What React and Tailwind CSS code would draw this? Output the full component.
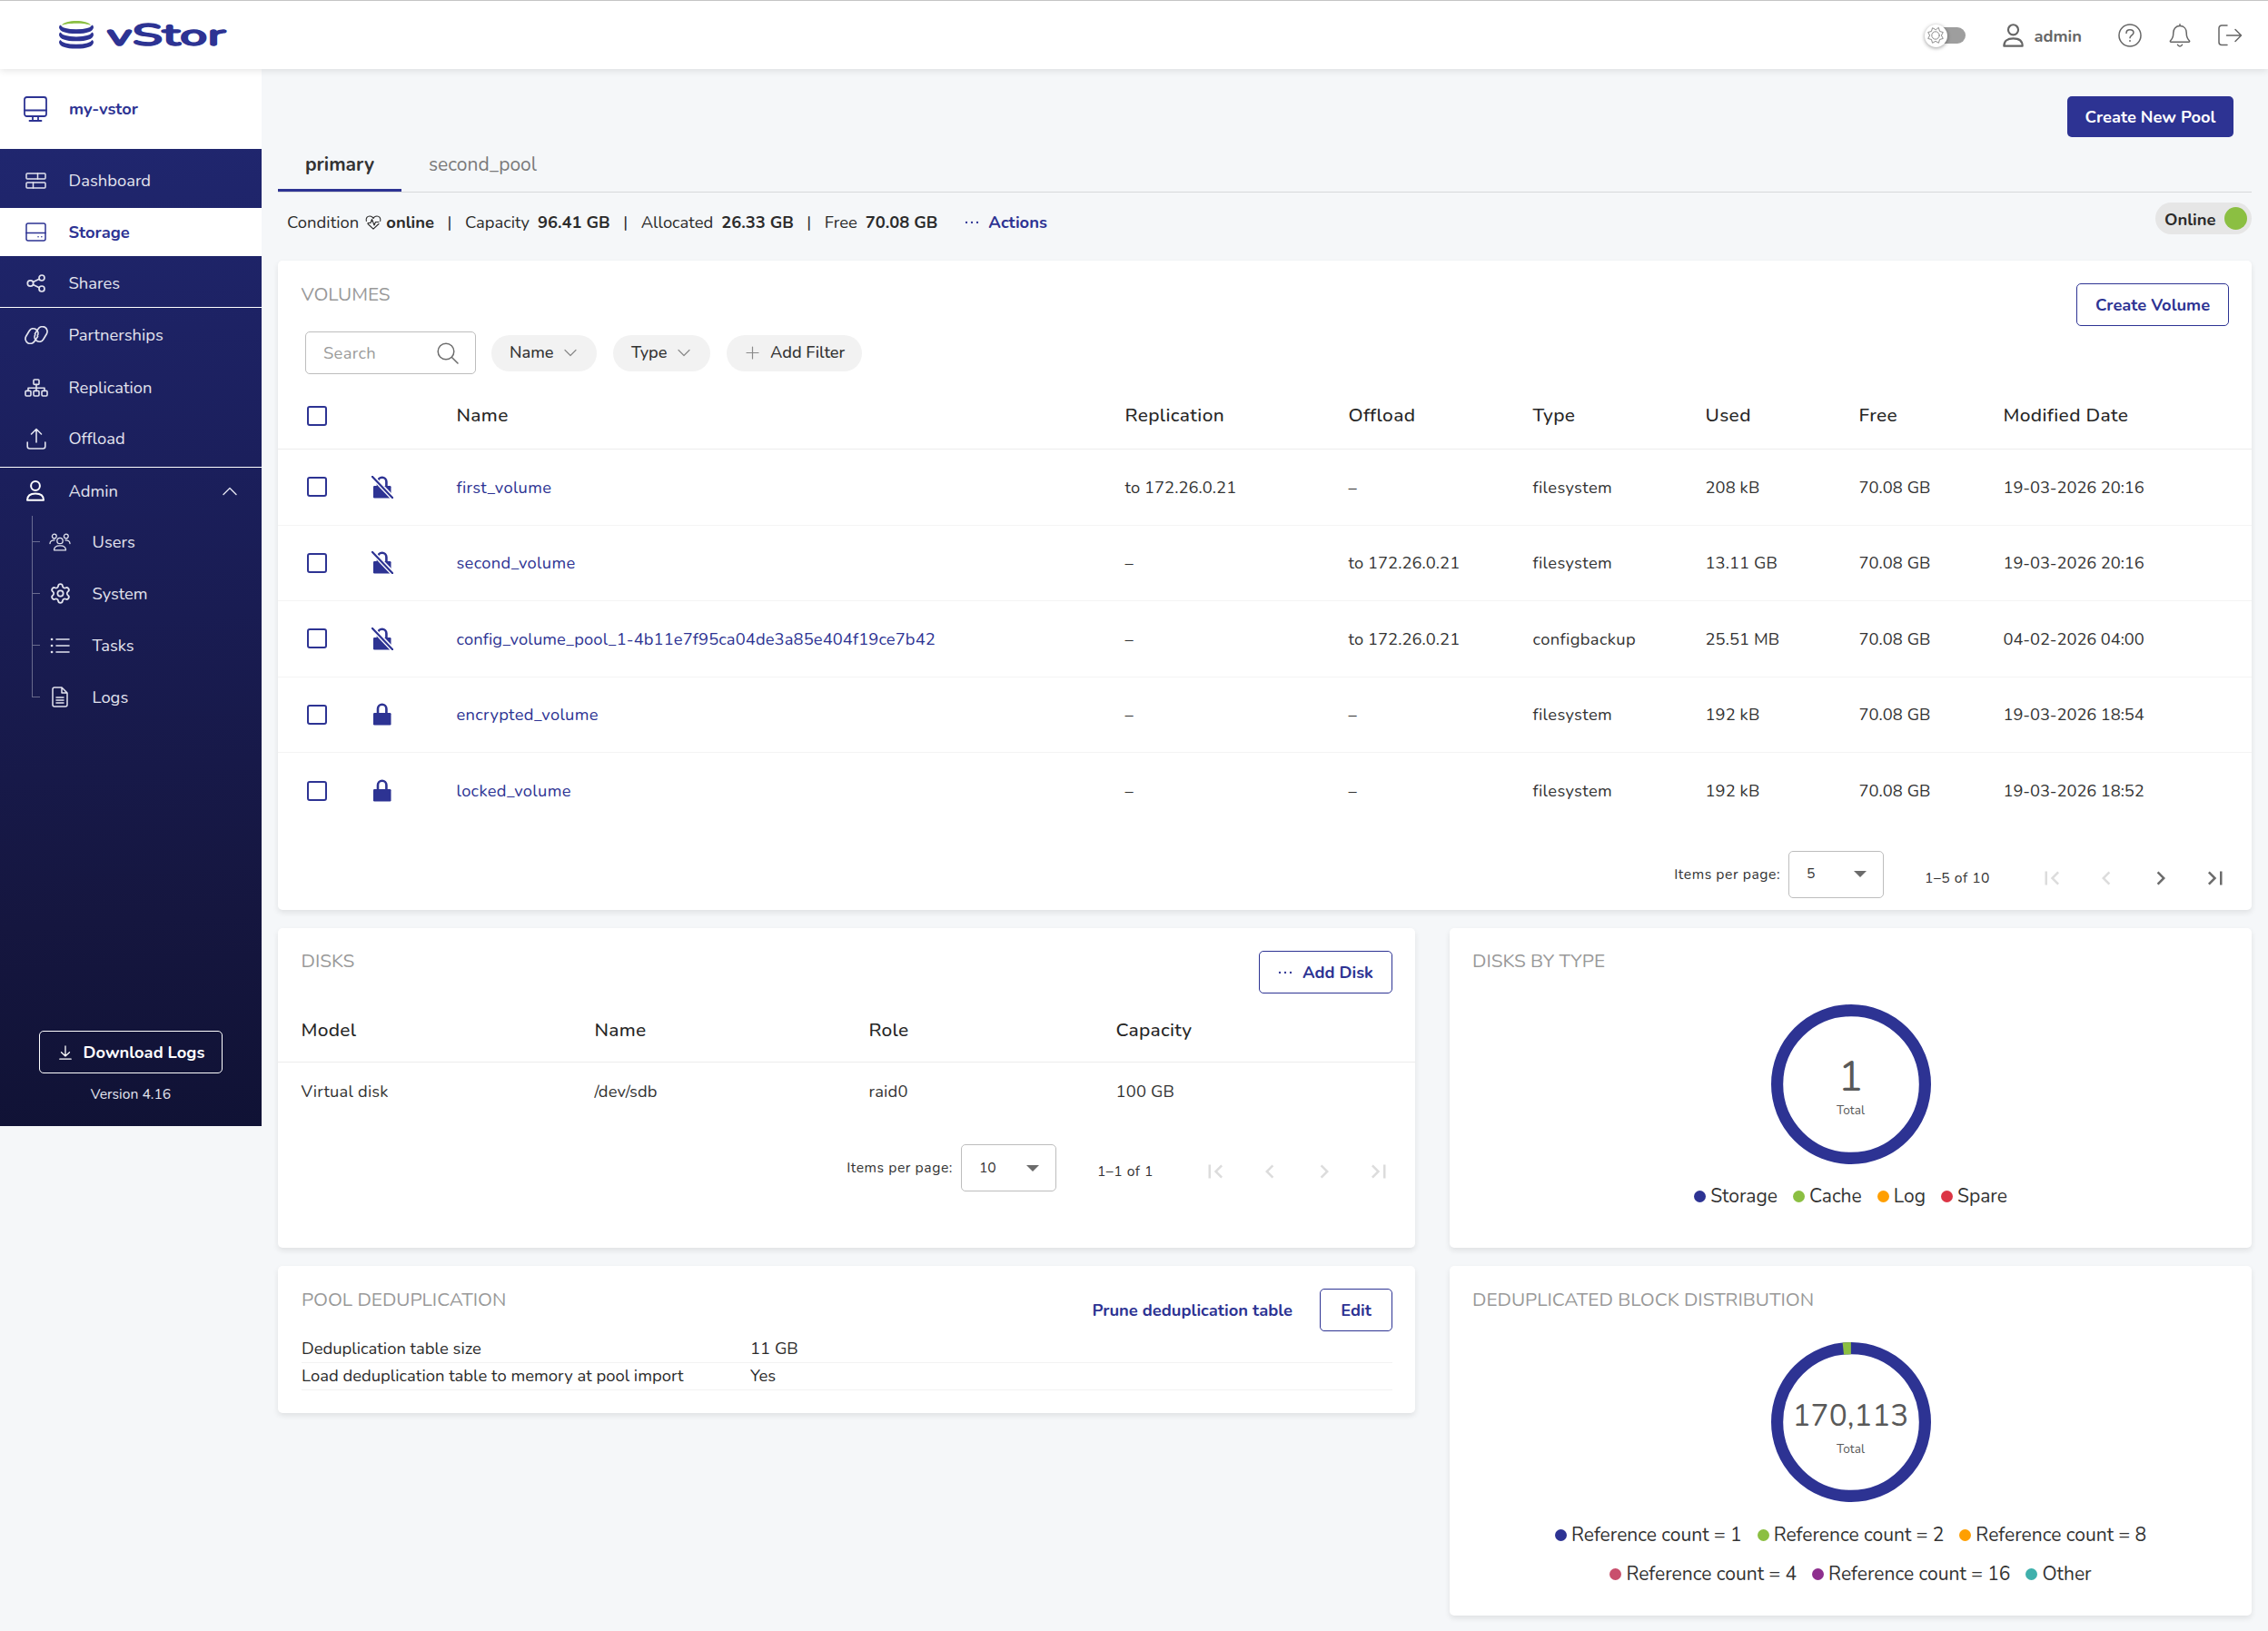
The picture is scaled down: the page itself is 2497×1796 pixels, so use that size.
import { Settings } from 'lucide-react';
import clsx from 'clsx';

const NAVY = '#2d3393';

const volumes = [
  { name: 'first_volume', locked: false, replication: 'to 172.26.0.21', offload: '–', type: 'filesystem', used: '208 kB', free: '70.08 GB', modified: '19-03-2026 20:16' },
  { name: 'second_volume', locked: false, replication: '–', offload: 'to 172.26.0.21', type: 'filesystem', used: '13.11 GB', free: '70.08 GB', modified: '19-03-2026 20:16' },
  { name: 'config_volume_pool_1-4b11e7f95ca04de3a85e404f19ce7b42', locked: false, replication: '–', offload: 'to 172.26.0.21', type: 'configbackup', used: '25.51 MB', free: '70.08 GB', modified: '04-02-2026 04:00' },
  { name: 'encrypted_volume', locked: true, replication: '–', offload: '–', type: 'filesystem', used: '192 kB', free: '70.08 GB', modified: '19-03-2026 18:54' },
  { name: 'locked_volume', locked: true, replication: '–', offload: '–', type: 'filesystem', used: '192 kB', free: '70.08 GB', modified: '19-03-2026 18:52' },
];

/* ---------- icons ---------- */

function Icon({ w = 24, h = w, box = `0 0 ${w} ${h}`, sw = 1.5, children, className }) {
  return (
    <svg
      width={w}
      height={h}
      viewBox={box}
      fill="none"
      stroke="currentColor"
      strokeWidth={sw}
      strokeLinecap="round"
      strokeLinejoin="round"
      className={clsx('shrink-0', className)}
    >
      {children}
    </svg>
  );
}

const Logo = () => (
  <svg width="200" height="40" viewBox="0 0 200 40" className="mt-[9px] shrink-0 overflow-visible">
    <path d="M3 5C6 -1.6 32 -1.6 35 5C30 2 8 2 3 5z" fill="#8bbf42" />
    {[0, 8.2, 16.6].map((y) => (
      <path
        key={y}
        transform={`translate(0 ${y})`}
        d="M0 7.2Q0 5 1.5 4.4Q4 9 19 9.2Q34 9 36.5 4.4Q38 5 38 7.2Q37 14 19 14Q1 14 0 7.2z"
        fill={NAVY}
      />
    ))}
    <text
      x="52.5"
      y="27"
      fontFamily="Nunito, 'Noto Sans', sans-serif"
      fontWeight="600"
      fontSize="33"
      fill={NAVY}
      stroke={NAVY}
      strokeWidth="1.5"
      strokeLinejoin="round"
      textLength="131"
      lengthAdjust="spacingAndGlyphs"
    >
      vStor
    </text>
  </svg>
);

const MonitorIcon = () => (
  <Icon w={26} h={28} sw={1.8}>
    <rect x="1" y="1" width="24" height="21" rx="2.5" />
    <path d="M1 15.5h24M10 22v4M16 22v4M6.5 27h13" />
  </Icon>
);
const DashboardIcon = () => (
  <Icon w={23} h={18} sw={1.5}>
    <rect x="1" y="1" width="21" height="6" rx="1" />
    <rect x="1" y="11" width="21" height="6" rx="1" />
    <path d="M13.5 1v6M8.5 11v6" />
  </Icon>
);
const StorageIcon = () => (
  <Icon w={23} h={21} sw={1.5}>
    <rect x="1" y="1" width="21" height="19" rx="2" />
    <path d="M1 11.5h21M14 15.8h.1M17.8 15.8h.1" />
  </Icon>
);
const ShareIcon = () => (
  <Icon w={22} h={20} sw={1.7}>
    <circle cx="4.5" cy="10" r="3.2" />
    <circle cx="17" cy="4" r="3" />
    <circle cx="17" cy="16" r="3" />
    <path d="M7.5 8.6l6.7-3.3M7.5 11.4l6.7 3.3" />
  </Icon>
);
const LinkIcon = () => (
  <Icon w={28} h={20} sw={1.7}>
    <path d="M15.5 11.5l-3.5 5.200a5.200 5.200 0 0 1-9.300-5.400l3.600-6.100a5.200 5.200 0 0 1 9 5.200" />
    <path d="M12.500 8.500l3.500-5.200a5.200 5.200 0 0 1 9.300 5.400l-3.600 6.100a5.200 5.200 0 0 1-9-5.200" />
  </Icon>
);
const TreeIcon = () => (
  <Icon w={26} h={20} sw={1.6}>
    <rect x="10" y="1" width="6" height="5.4" rx="1" />
    <rect x="1" y="13.4" width="6" height="5.6" rx="1.2" />
    <rect x="10" y="13.4" width="6" height="5.6" rx="1.2" />
    <rect x="19" y="13.4" width="6" height="5.6" rx="1.2" />
    <path d="M13 6.5v7M4 13v-2.8h18V13" />
  </Icon>
);
const UploadIcon = () => (
  <Icon w={22} h={24} sw={1.6}>
    <path d="M11 16V1.500M5.500 7L11 1.500 16.500 7M1.200 16v4.500a2.500 2.500 0 0 0 2.500 2.500h14.600a2.500 2.500 0 0 0 2.500-2.500V16" />
  </Icon>
);
const UserIcon = ({ w = 20, h = 23, sw = 1.9 }) => (
  <Icon w={w} h={h} box="0 0 20 23" sw={sw}>
    <circle cx="10" cy="6" r="4.9" />
    <path d="M1 21.800c0-4.700 3-7.300 9-7.300s9 2.600 9 7.300z" />
  </Icon>
);
const UsersIcon = () => (
  <Icon w={24} h={20} sw={1.3}>
    <circle cx="12" cy="8.5" r="3.2" />
    <circle cx="5.8" cy="3.6" r="2.4" />
    <circle cx="18.800" cy="3.6" r="2.4" />
    <path d="M5.500 18.800c0-3.600 2.500-5 6.500-5s6.500 1.400 6.500 5zM1 11.500c0-2.500 1.800-3.700 5-3.600M23 11.500c0-2.500-1.800-3.700-5-3.600" />
  </Icon>
);
const ListIcon = () => (
  <Icon w={22} h={18} sw={1.6}>
    <path d="M7 2h14M7 9h14M7 16h14" />
    <path d="M2 2h.1M2 9h.1M2 16h.1" strokeWidth="2.6" />
  </Icon>
);
const FileIcon = () => (
  <Icon w={18} h={23} sw={1.5}>
    <path d="M11 1H3a2 2 0 0 0-2 2v17a2 2 0 0 0 2 2h12a2 2 0 0 0 2-2V7zM11 1v6h6M5 12h8M5 15h8M5 18h8" />
  </Icon>
);
const ChevronUp = () => (
  <Icon w={16} h={10} sw={1.4}>
    <path d="M1 8.500l7-7 7 7" />
  </Icon>
);
const ChevronDown = () => (
  <Icon w={14} h={9} sw={1.2} className="text-[#8a8a8a]">
    <path d="M1 1.500l6 6 6-6" />
  </Icon>
);
const DownloadIcon = () => (
  <Icon w={14} h={16} sw={1.3}>
    <path d="M7 1v11M2.500 7.800L7 12l4.500-4.200M.8 15.200h12.400" />
  </Icon>
);
const Dots = () => (
  <svg width="16" height="4" viewBox="0 0 16 4" fill="currentColor" className="shrink-0">
    <circle cx="2" cy="2" r="1.15" />
    <circle cx="8" cy="2" r="1.15" />
    <circle cx="14" cy="2" r="1.15" />
  </svg>
);
const HelpIcon = () => (
  <Icon w={26} sw={1.5}>
    <circle cx="13" cy="13" r="12" />
    <path d="M9 10.400c0-2.300 1.700-3.700 4-3.700s4 1.300 4 3.300c0 2.800-4 3-4 5.700" />
    <path d="M13 19v.1" strokeWidth="1.9" />
  </Icon>
);
const BellIcon = () => (
  <Icon w={24} h={26} sw={1.5}>
    <path d="M12 .8V2.500M12 2.500c-4.400 0-7.200 3.200-7.200 7.500 0 6-1.400 7-3.200 8.700-.6.7-.2 1.500.6 1.500h19.600c.8 0 1.200-.8.6-1.500-1.800-1.700-3.200-2.700-3.200-8.700 0-4.300-2.800-7.500-7.200-7.500zM9.500 23.200c.5 1.200 1.400 1.700 2.500 1.700s2-.5 2.500-1.700" />
  </Icon>
);
const LogoutIcon = () => (
  <Icon w={27} h={24} sw={1.5}>
    <path d="M10 1H4a3 3 0 0 0-3 3v15.500a3 3 0 0 0 3 3h6M9.500 12h16M19 5.500l6.500 6.500-6.500 6.500" />
  </Icon>
);
const HeartIcon = () => (
  <Icon w={18} h={16} sw={1.1}>
    <path d="M3 9.500l6 5.700 6-5.700M1.300 6.500C.6 3 2.500 1 5 1c2 0 3.300 1 4 2.500C9.700 2 11 1 13 1c2.500 0 4.400 2 3.700 5.500" />
    <path d="M3 8.500h3l1.500-4 2.500 6.500 1.500-3.500H15" />
  </Icon>
);
const SearchIcon = () => (
  <Icon w={24} sw={1.5} className="text-[#6b6b6b]">
    <circle cx="10" cy="10" r="8.8" />
    <path d="M16.500 16.500l6.500 6.500" />
  </Icon>
);
const PlusIcon = () => (
  <Icon w={15} sw={1.2} className="text-[#8a8a8a]">
    <path d="M7.500 1v13M1 7.500h13" />
  </Icon>
);

// Eight pointed sun on the theme switch knob
const sunPoints = Array.from({ length: 16 }, (_, i) => {
  const r = i % 2 ? 6.4 : 9;
  const a = (i * Math.PI) / 8 + Math.PI / 8;
  return `${(10 + r * Math.sin(a)).toFixed(2)},${(10 - r * Math.cos(a)).toFixed(2)}`;
}).join(' ');
const SunIcon = () => (
  <Icon w={20} sw={1} className="text-[#8c8c8c]">
    <polygon points={sunPoints} />
    <circle cx="10" cy="10" r="4.2" />
  </Icon>
);

function LockIcon({ locked }) {
  return (
    <svg width="24" height="25" viewBox="0 0 24 25" className="text-[#2d3393]" fill="none" stroke="currentColor">
      <path d="M7 12V6.500a4.700 4.700 0 0 1 9.400 0V12" strokeWidth="2.6" />
      <rect x="2" y="11" width="19.5" height="13.5" rx="1.2" fill="currentColor" stroke="none" />
      {!locked && (
        <>
          <path d="M-1 -1.200L25 26" stroke="#fff" strokeWidth="5" />
          <path d="M.8 .8L23.200 24.200" strokeWidth="2.2" strokeLinecap="round" />
        </>
      )}
    </svg>
  );
}

/* ---------- shared pieces ---------- */

const Card = ({ className, children }) => (
  <section className={clsx('flex flex-col rounded-[5px] bg-white shadow-[0_3px_6px_rgba(0,0,0,0.09)]', className)}>
    {children}
  </section>
);

const CardTitle = ({ children, className }) => (
  <h2 className={clsx('text-[20.75px] leading-[27px] whitespace-nowrap text-[#999]', className)}>{children}</h2>
);

const OutlineButton = ({ children, className }) => (
  <button
    className={clsx(
      'flex h-[47px] items-center justify-center rounded-[5px] border-[1.5px] border-[#2d3393] pt-px text-[18.33px] font-bold whitespace-nowrap text-[#2d3393]',
      className
    )}
  >
    {children}
  </button>
);

const Checkbox = () => <span className="block size-[22px] rounded-[3px] border-2 border-[#2d3393]" />;

const pageIcons = [
  'M18.41 16.59L13.82 12l4.59-4.59L17 6l-6 6 6 6zM6 6h2v12H6z',
  'M15.41 7.41L14 6l-6 6 6 6 1.41-1.41L10.83 12z',
  'M10 6L8.59 7.41 13.17 12l-4.58 4.59L10 18l6-6z',
  'M5.59 7.41L10.18 12l-4.59 4.59L7 18l6-6-6-6zM16 6h2v12h-2z',
];

function Paginator({ size, range, active }) {
  return (
    <div className="flex h-[52px] items-center justify-end pr-[10px] text-[15.7px] text-[#333]">
      <span className="mr-[9px] pt-[2px] tracking-[0.55px]">Items per page:</span>
      <div className="flex h-full w-[105px] items-center justify-between rounded-[5px] border-[1.5px] border-[#bdbdbd] pr-[18px] pl-[19px]">
        <span className="pt-px">{size}</span>
        <svg width="14" height="7" viewBox="0 0 14 7" fill="#6b6b6b">
          <path d="M0 0h14L7 7z" />
        </svg>
      </div>
      <span className="mt-[10px] ml-[45px] tracking-[0.5px]">{range}</span>
      <div className="mt-[8px] ml-[38px] flex">
        {pageIcons.map((d, i) => (
          <span key={d} className="flex w-[60px] justify-center">
            <svg width="30" height="30" viewBox="0 0 24 24" fill={active.includes(i) ? '#6b6b6b' : '#dcdcdc'}>
              <path d={d} />
            </svg>
          </span>
        ))}
      </div>
    </div>
  );
}

function Donut({ value, valueClass, totalClass, slice = 0 }) {
  const r = 81.4;
  const c = 2 * Math.PI * r;
  return (
    <div className="relative size-[176px]">
      <svg width="176" height="176" viewBox="0 0 176 176" fill="none" strokeWidth="13.2">
        <circle cx="88" cy="88" r={r} stroke={NAVY} />
        {slice > 0 && (
          <circle
            cx="88"
            cy="88"
            r={r}
            stroke="#8bbf42"
            strokeDasharray={`${c * slice} ${c}`}
            transform={`rotate(${-90 - slice * 360} 88 88)`}
          />
        )}
      </svg>
      <div className="absolute inset-0 flex flex-col items-center text-[#595959]">
        <span className={valueClass}>{value}</span>
        <span className={clsx('text-[13.6px] leading-4 tracking-[0.1px]', totalClass)}>Total</span>
      </div>
    </div>
  );
}

const Legend = ({ items, className }) => (
  <div className={clsx('flex justify-center gap-[17px] text-[21px] leading-7 text-[#333]', className)}>
    {items.map(([label, dot]) => (
      <span key={label} className="flex items-center gap-[5px] whitespace-nowrap">
        <i className={clsx('size-[13px] rounded-full', dot)} />
        {label}
      </span>
    ))}
  </div>
);

/* ---------- page sections ---------- */

function Header() {
  return (
    <header className="relative z-10 flex h-[76px] items-center border-t border-[#c4c4c4] bg-white pr-[28px] pl-[65px] text-[#666] shadow-[0_2px_8px_rgba(0,0,0,0.1)]">
      <Logo />
      <div className="mt-[2px] ml-auto flex items-center">
        <div className="relative flex h-[26px] w-[45px] items-center">
          <span className="ml-[6px] h-[18px] w-[39px] rounded-full bg-[#9e9e9e]" />
          <span className="absolute left-0 flex size-[25px] items-center justify-center rounded-full bg-white shadow-[0_1px_4px_rgba(0,0,0,0.4)]">
            <SunIcon />
          </span>
        </div>
        <span className="ml-[41px]">
          <UserIcon w={23} h={26} sw={1.9} />
        </span>
        <span className="mt-px ml-[12px] text-[18.33px] font-bold">admin</span>
        <div className="ml-[40px] flex items-center gap-[30px]">
          <HelpIcon />
          <BellIcon />
          <LogoutIcon />
        </div>
      </div>
    </header>
  );
}

const NavItem = ({ icon, label, className }) => (
  <a className={clsx('flex shrink-0 items-center text-[18.4px]', className)}>
    <span className="flex w-[75.5px] justify-center pr-[2px] pl-[6px]">{icon}</span>
    {label}
  </a>
);

const adminItems = [
  ['Users', <UsersIcon />],
  ['System', <Settings size={25} strokeWidth={1.7} />],
  ['Tasks', <ListIcon />],
  ['Logs', <FileIcon />],
];

function Sidebar() {
  return (
    <aside className="flex h-[1164px] w-[288px] shrink-0 flex-col bg-[linear-gradient(176deg,#212873_0%,#1b1f5c_38%,#15163f_80%,#101235_100%)] text-[#e2e3ee]">
      <div className="flex h-[88px] shrink-0 items-center bg-white pl-[26px] text-[18.33px] font-bold text-[#2d3393]">
        <MonitorIcon />
        <span className="ml-[24px]">my-vstor</span>
      </div>
      <NavItem icon={<DashboardIcon />} label="Dashboard" className="h-[65px] pt-[5px]" />
      <NavItem icon={<StorageIcon />} label="Storage" className="h-[53px] bg-white font-bold text-[#2d3393]" />
      <NavItem icon={<ShareIcon />} label="Shares" className="h-[57px] border-b border-white pt-[4px]" />
      <NavItem icon={<LinkIcon />} label="Partnerships" className="h-[59px] pt-px" />
      <NavItem icon={<TreeIcon />} label="Replication" className="h-[57px]" />
      <NavItem icon={<UploadIcon />} label="Offload" className="h-[60px] border-b border-white pb-[3px]" />
      <div className="flex h-[53px] shrink-0 items-center justify-between pr-[27px] pb-[2px]">
        <NavItem icon={<span className="pr-[2px] text-white"><UserIcon w={20} h={23} sw={2} /></span>} label="Admin" />
        <ChevronUp />
      </div>
      {adminItems.map(([label, icon], i) => (
        <div key={label} className="flex h-[57px] shrink-0 items-center text-[18.4px]">
          <div className="ml-[35px] h-full w-[9px]">
            <div className="h-[29px] border-b border-l border-white/35" />
            {i < adminItems.length - 1 && <div className="h-[28px] border-l border-white/35" />}
          </div>
          <span className="flex w-[57.5px] items-center justify-center pr-[13px]">{icon}</span>
          {label}
        </div>
      ))}
      <div className="mt-auto flex flex-col items-center">
        <button className="flex h-[47px] w-[202px] items-center justify-center gap-[13px] rounded-[5px] border-[1.5px] border-white pl-[2px] text-[18.33px] font-bold text-white">
          <DownloadIcon />
          <span className="pt-px">Download Logs</span>
        </button>
        <span className="mt-[12px] mb-[24px] text-[15.7px] leading-[22px]">Version 4.16</span>
      </div>
    </aside>
  );
}

const Stat = ({ label, value }) => (
  <>
    <span className="w-[34px] text-center">|</span>
    <span className="mr-[9px]">{label}</span>
    <span className="text-[18.33px] font-bold">{value}</span>
  </>
);

function PoolStatus() {
  return (
    <div className="flex h-[75px] items-start justify-between pl-[10px] text-[18.4px] text-[#2b2b2b]">
      <div className="flex h-[66px] items-center whitespace-nowrap">
        <span className="mr-[7px] tracking-[0.05px]">Condition</span>
        <HeartIcon />
        <span className="ml-[5px] font-bold">online</span>
        <Stat label="Capacity" value="96.41 GB" />
        <Stat label="Allocated" value="26.33 GB" />
        <Stat label="Free" value="70.08 GB" />
        <span className="ml-[30px] flex items-center gap-[10px] font-bold text-[#2d3393]">
          <Dots />
          Actions
        </span>
      </div>
      <div className="mt-[11px] flex h-[35px] w-[106px] items-center justify-between rounded-full bg-[#e6e6e6] pr-[5px] pl-[10px] font-bold">
        <span className="pt-[2px]">Online</span>
        <span className="size-[25px] rounded-full bg-[#8bbf42]" />
      </div>
    </div>
  );
}

const pill = 'flex h-[40px] items-center rounded-full bg-[#f2f2f2] text-[18.2px] font-medium text-[#333]';
const volumeGrid = 'grid grid-cols-[71px_93.5px_736px_246px_203px_190px_169px_159px_1fr] items-center pl-[32px] whitespace-nowrap';

function VolumesCard() {
  return (
    <Card className="h-[715px]">
      <div className="flex h-[78px] items-start justify-between pr-[25px] pl-[25.5px]">
        <CardTitle className="mt-[24px]">VOLUMES</CardTitle>
        <OutlineButton className="mt-[25px] w-[168px]">Create Volume</OutlineButton>
      </div>

      <div className="flex items-center pl-[30px]">
        <div className="flex h-[47px] w-[188px] items-center justify-between rounded-[5px] border-[1.5px] border-[#bdbdbd] pr-[18px] pl-[19px] text-[18.33px] tracking-[0.33px] text-[#9b9b9b]">
          Search
          <SearchIcon />
        </div>
        <div className={clsx(pill, 'ml-[17px] w-[116px] gap-[11px] pl-[20px]')}>Name <ChevronDown /></div>
        <div className={clsx(pill, 'ml-[18px] w-[107px] gap-[11px] pl-[20px]')}>Type <ChevronDown /></div>
        <div className={clsx(pill, 'ml-[18px] w-[149px] gap-[12px] pl-[21px]')}><PlusIcon /> Add Filter</div>
      </div>

      <div className={clsx(volumeGrid, 'h-[83px] border-b border-[#ececec] pt-[9px] text-[20.9px] font-medium tracking-[0.37px] text-[#262626]')}>
        <Checkbox />
        <span />
        <span>Name</span>
        <span>Replication</span>
        <span>Offload</span>
        <span>Type</span>
        <span>Used</span>
        <span>Free</span>
        <span>Modified Date</span>
      </div>
      {volumes.map((v, i) => (
        <div
          key={v.name}
          className={clsx(volumeGrid, 'h-[83.5px] text-[18.33px] text-[#333]', i < volumes.length - 1 && 'border-b border-[#f4f4f4]')}
        >
          <Checkbox />
          <LockIcon locked={v.locked} />
          <span className={clsx('text-[#2d3393]', v.name.length > 20 ? 'tracking-[0.12px]' : 'tracking-[0.3px]')}>{v.name}</span>
          <span className="tracking-[0.07px]">{v.replication}</span>
          <span className="tracking-[0.07px]">{v.offload}</span>
          <span className="tracking-[0.38px]">{v.type}</span>
          <span className="tracking-[0.1px]">{v.used}</span>
          <span className="tracking-[0.05px]">{v.free}</span>
          <span className="tracking-[-0.08px]">{v.modified}</span>
        </div>
      ))}
      <div className="mt-[24px]">
        <Paginator size="5" range="1–5 of 10" active={[2, 3]} />
      </div>
    </Card>
  );
}

const diskGrid = 'grid grid-cols-[323px_302px_272px_1fr] items-center pl-[25.5px]';

function DisksCard() {
  return (
    <Card className="h-[352px]">
      <div className="flex h-[72px] items-start justify-between pr-[25px] pl-[25.5px]">
        <CardTitle className="mt-[23px]">DISKS</CardTitle>
        <OutlineButton className="mt-[25px] w-[147px] gap-[11px]"><Dots /> Add Disk</OutlineButton>
      </div>
      <div className={clsx(diskGrid, 'h-[76px] border-b border-[#ececec] pt-[6px] text-[20.9px] font-medium tracking-[0.3px] text-[#262626]')}>
        <span>Model</span>
        <span>Name</span>
        <span>Role</span>
        <span>Capacity</span>
      </div>
      <div className={clsx(diskGrid, 'h-[64px] text-[18.33px] tracking-[0.2px] text-[#333]')}>
        <span>Virtual disk</span>
        <span>/dev/sdb</span>
        <span>raid0</span>
        <span>100 GB</span>
      </div>
      <div className="mt-[26px]">
        <Paginator size="10" range="1–1 of 1" active={[]} />
      </div>
    </Card>
  );
}

function DedupCard() {
  return (
    <Card className="h-[162px] pr-[25px] pl-[26px]">
      <div className="flex h-[72px] items-start">
        <CardTitle className="mt-[24px]">POOL DEDUPLICATION</CardTitle>
        <button className="mt-[25px] mr-[30px] ml-auto h-[47px] pt-px text-[18.4px] font-bold text-[#2d3393]">
          Prune deduplication table
        </button>
        <OutlineButton className="mt-[25px] w-[80px]">Edit</OutlineButton>
      </div>
      <dl className="mt-[5px] text-[18.45px] text-[#2b2b2b]">
        {[
          ['Deduplication table size', '11 GB'],
          ['Load deduplication table to memory at pool import', 'Yes'],
        ].map(([k, v]) => (
          <div key={k} className="flex h-[30px] items-center border-b border-[#f2f2f2]">
            <dt className="w-[494px]">{k}</dt>
            <dd>{v}</dd>
          </div>
        ))}
      </dl>
    </Card>
  );
}

export default function App() {
  return (
    <div className="min-h-[1796px] w-full bg-[#f5f7f9] font-['Nunito','Noto_Sans',sans-serif]">
      <Header />
      <div className="flex items-start">
        <Sidebar />
        <main className="flex min-w-0 flex-1 flex-col pr-[18px] pl-[18px]">
          <button className="mt-[30px] mr-[20px] h-[45px] w-[183px] self-end rounded-[5px] bg-[#2d3393] pt-px text-[18.33px] font-bold text-white">
            Create New Pool
          </button>
          <nav className="flex h-[61px] border-b border-[#d6d8da] text-[21px]">
            <a className="flex w-[136px] items-center justify-center rounded-t-sm border-b-[3px] border-[#2d3393] pt-[4px] font-bold text-[#333]">primary</a>
            <a className="flex items-center pt-[2px] pl-[30px] text-[#7a7a7a]">second_pool</a>
          </nav>
          <PoolStatus />
          <VolumesCard />
          <div className="mt-[20px] grid grid-cols-[1252px_883px] items-start gap-x-[38px] gap-y-[20px]">
            <DisksCard />
            <Card className="h-[352px] items-center">
              <CardTitle className="mt-[23px] mb-[34px] self-start pl-[25px]">DISKS BY TYPE</CardTitle>
              <Donut value="1" valueClass="mt-[57px] text-[46px] leading-[46px]" totalClass="mt-[6px]" />
              <Legend
                className="mt-[21px]"
                items={[
                  ['Storage', 'bg-[#2d3393]'],
                  ['Cache', 'bg-[#8bbf42]'],
                  ['Log', 'bg-[#ff9f00]'],
                  ['Spare', 'bg-[#dc3545]'],
                ]}
              />
            </Card>
            <DedupCard />
            <Card className="h-[385px] items-center">
              <CardTitle className="mt-[24px] mb-[33px] self-start pl-[25px]">DEDUPLICATED BLOCK DISTRIBUTION</CardTitle>
              <Donut value="170,113" slice={0.017} valueClass="mt-[58px] text-[33.4px] leading-[46px]" totalClass="mt-[6px]" />
              <Legend
                className="mt-[22px]"
                items={[
                  ['Reference count = 1', 'bg-[#2d3393]'],
                  ['Reference count = 2', 'bg-[#8bbf42]'],
                  ['Reference count = 8', 'bg-[#ff9f00]'],
                ]}
              />
              <Legend
                className="mt-[15px]"
                items={[
                  ['Reference count = 4', 'bg-[#c94f6d]'],
                  ['Reference count = 16', 'bg-[#8e2f8e]'],
                  ['Other', 'bg-[#3fb0ac]'],
                ]}
              />
            </Card>
          </div>
        </main>
      </div>
    </div>
  );
}
